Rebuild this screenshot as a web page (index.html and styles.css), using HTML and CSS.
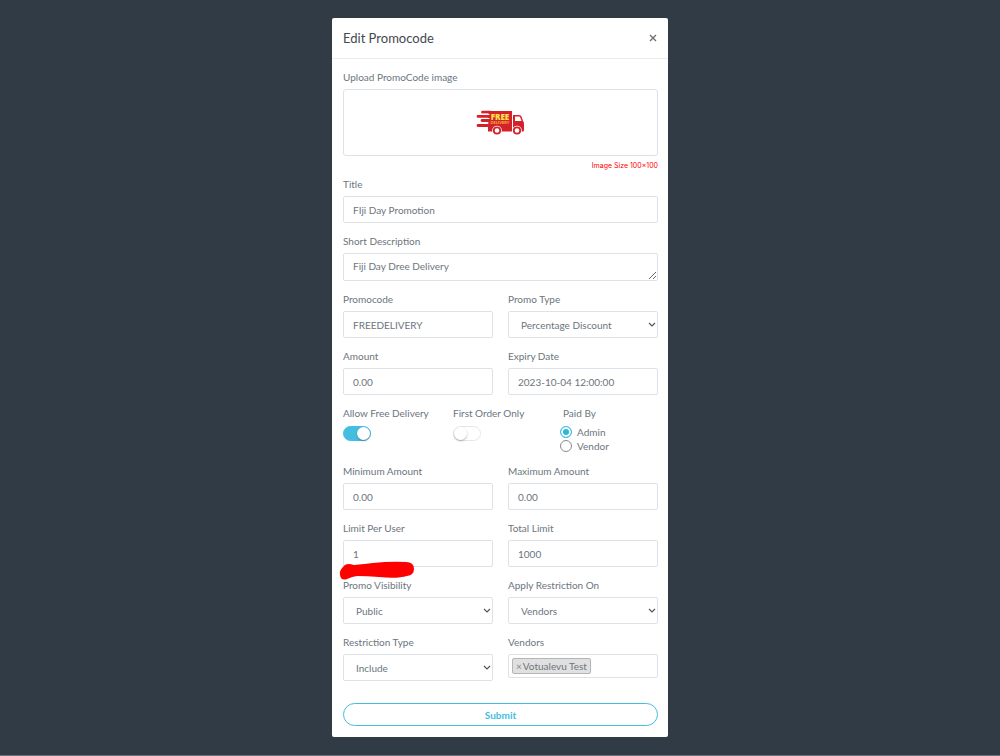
FILE: index.html
```html
<!DOCTYPE html>
<html lang="en">
<head>
    <meta charset="UTF-8">
    <meta name="viewport" content="width=device-width, initial-scale=1.0">
    <title>Edit Promocode</title>
    <link rel="stylesheet" href="styles.css">
</head>
<body>
    <div class="modal">
        <div class="modal-header">
            <h4 class="modal-title">Edit Promocode</h4>
            <button type="button" class="close" aria-label="Close">
                <svg width="8" height="8" viewBox="0 0 8 8"><path d="M1 1 L7 7 M7 1 L1 7" stroke="#6b7075" stroke-width="1.4" fill="none"/></svg>
            </button>
        </div>
        <form class="modal-body">
            <div class="upload-group">
                <label for="promoImage">Upload PromoCode image</label>
                <button type="button" class="dropify" id="promoImage">
                    <svg width="50" height="26" viewBox="0 0 50 26">
                        <path d="M12 1 H36 V21.500 H12 Z" fill="#d3222a"/>
                        <path d="M6.500 2.200 H14 M2 6.400 H14 M6 10.500 H14 M2 15.500 H14" stroke="#d3222a" stroke-width="2.800" stroke-linecap="round"/>
                        <path d="M7 4.300 H13 M7 8.500 H13 M7 12.900 H12" stroke="#fff" stroke-width="1.200" stroke-linecap="round"/>
                        <path d="M37 5 H43 Q45 5 45.500 6.500 L47 11 Q48 12 48 14 V20 Q48 21.500 47 21.500 H37 Z" fill="#d3222a"/>
                        <path d="M39 6.500 H43 Q44 6.500 44.300 7.500 L45.500 11 H39 Z" fill="#fff"/>
                        <circle cx="21" cy="20.500" r="4.800" fill="#fff"/>
                        <circle cx="21" cy="20.500" r="3.200" fill="#fff" stroke="#d3222a" stroke-width="1.800"/>
                        <circle cx="41" cy="20.500" r="4.800" fill="#fff"/>
                        <circle cx="41" cy="20.500" r="3.200" fill="#fff" stroke="#d3222a" stroke-width="1.800"/>
                        <text class="truck-free" x="24" y="10">FREE</text>
                        <text class="truck-delivery" x="24" y="14">DELIVERY</text>
                    </svg>
                </button>
                <p class="image-note">Image Size 100×100</p>
            </div>

            <div class="form-group">
                <label for="title">Title</label>
                <input type="text" id="title" class="form-control" value="FIji Day Promotion">
            </div>
            <div class="form-group">
                <label for="description">Short Description</label>
                <textarea id="description" class="form-control" rows="1">Fiji Day Dree Delivery</textarea>
            </div>

            <div class="row">
                <div class="form-group">
                    <label for="promocode">Promocode</label>
                    <input type="text" id="promocode" class="form-control" value="FREEDELIVERY">
                </div>
                <div class="form-group">
                    <label for="promoType">Promo Type</label>
                    <select id="promoType" class="form-control">
                        <option>Percentage Discount</option>
                    </select>
                </div>
            </div>

            <div class="row">
                <div class="form-group">
                    <label for="amount">Amount</label>
                    <input type="text" id="amount" class="form-control" value="0.00">
                </div>
                <div class="form-group">
                    <label for="expiry">Expiry Date</label>
                    <input type="text" id="expiry" class="form-control" value="2023-10-04 12:00:00">
                </div>
            </div>

            <div class="row row-switches">
                <div class="form-group">
                    <label for="freeDelivery">Allow Free Delivery</label>
                    <input type="checkbox" id="freeDelivery" class="switch" checked>
                </div>
                <div class="form-group">
                    <label for="firstOrder">First Order Only</label>
                    <input type="checkbox" id="firstOrder" class="switch">
                </div>
                <fieldset class="form-group">
                    <legend>Paid By</legend>
                    <div class="radios">
                        <label class="radio"><input type="radio" name="paidBy" checked>Admin</label>
                        <label class="radio"><input type="radio" name="paidBy">Vendor</label>
                    </div>
                </fieldset>
            </div>

            <div class="row">
                <div class="form-group">
                    <label for="minAmount">Minimum Amount</label>
                    <input type="text" id="minAmount" class="form-control" value="0.00">
                </div>
                <div class="form-group">
                    <label for="maxAmount">Maximum Amount</label>
                    <input type="text" id="maxAmount" class="form-control" value="0.00">
                </div>
            </div>

            <div class="row">
                <div class="form-group marked">
                    <label for="userLimit">Limit Per User</label>
                    <input type="text" id="userLimit" class="form-control" value="1">
                    <svg class="marker" width="76" height="20" viewBox="0 0 76 20">
                        <path d="M4 6 Q7 1 15 4 Q26 3 34 2 Q52 0 67 1 Q75 1 75 8 Q75 14 68 15 Q58 18 40 16 Q28 15 18 15 Q12 16 8 18 Q2 20 1 14 Q0 10 4 6 Z" fill="#fe0000"/>
                    </svg>
                </div>
                <div class="form-group">
                    <label for="totalLimit">Total Limit</label>
                    <input type="text" id="totalLimit" class="form-control" value="1000">
                </div>
            </div>

            <div class="row">
                <div class="form-group">
                    <label for="visibility">Promo Visibility</label>
                    <select id="visibility" class="form-control">
                        <option>Public</option>
                    </select>
                </div>
                <div class="form-group">
                    <label for="restrictionOn">Apply Restriction On</label>
                    <select id="restrictionOn" class="form-control">
                        <option>Vendors</option>
                    </select>
                </div>
            </div>

            <div class="row">
                <div class="form-group">
                    <label for="restrictionType">Restriction Type</label>
                    <select id="restrictionType" class="form-control">
                        <option>Include</option>
                    </select>
                </div>
                <div class="form-group">
                    <label for="vendors">Vendors</label>
                    <div class="tags">
                        <span class="tag"><button type="button" class="tag-remove" aria-label="Remove">×</button>Votualevu Test</span>
                        <input type="text" id="vendors" class="tags-input">
                    </div>
                </div>
            </div>

            <button type="submit" class="btn-submit">Submit</button>
        </form>
    </div>
</body>
</html>
```
FILE: styles.css
```css
* {
    box-sizing: border-box;
}

body {
    margin: 0;
    min-height: 100vh;
    padding: 18px 0;
    background-color: #313b45;
    border-bottom: 1px solid #6b727b;
    color: #6c757d;
    font-family: Lato, "Liberation Sans", sans-serif;
    font-size: 10px;
    line-height: 16px;
}

input, select, textarea, button {
    font: inherit;
    color: inherit;
}

.modal {
    width: 100%;
    max-width: 336px;
    margin: 0 auto;
    background-color: #fff;
    border-radius: 2px;
}

.modal-header {
    display: flex;
    justify-content: space-between;
    align-items: flex-start;
    padding: 12px 11px;
    border-bottom: 1px solid #e9ecef;
}

.modal-title {
    margin: 0;
    color: #43494f;
    font-size: 13px;
    font-weight: 400;
    line-height: 16px;
}

.close {
    display: flex;
    padding: 4px 0;
    border: 0;
    background: none;
    cursor: pointer;
}

.modal-body {
    padding: 10px 10px 11px 11px;
}

label, legend {
    display: block;
    padding: 0;
    margin-bottom: 4px;
}

.dropify {
    display: flex;
    align-items: center;
    justify-content: center;
    width: 100%;
    height: 67px;
    padding: 0;
    border: 1px solid #dee2e6;
    border-radius: 3px;
    background-color: #fff;
}

.truck-free {
    fill: #ffe14d;
    font-family: "Open Sans", sans-serif;
    font-size: 8px;
    font-weight: 800;
    text-anchor: middle;
}

.truck-delivery {
    fill: #f5b335;
    font-size: 4px;
    font-weight: 900;
    text-anchor: middle;
}

.image-note {
    margin: 4px 0;
    color: #f00;
    font-family: Inter, sans-serif;
    font-size: 7px;
    line-height: 12px;
    text-align: right;
}

.form-group {
    min-width: 0;
    margin: 0 0 10px;
    padding: 0;
    border: 0;
}

.row {
    display: grid;
    grid-template-columns: 1fr 1fr;
    gap: 15px;
}

.row-switches {
    grid-template-columns: 1fr 1fr 1fr;
}

.form-control {
    display: block;
    width: 100%;
    height: 27px;
    padding: 4px 9px;
    border: 1px solid #dee2e6;
    border-radius: 2px;
    background-color: #fff;
}

textarea.form-control {
    height: 28px;
    resize: vertical;
    overflow: hidden;
}

select.form-control {
    appearance: none;
    padding: 4px 12px;
    background: #fff url("data:image/svg+xml,%3Csvg xmlns='http://www.w3.org/2000/svg' width='8' height='6'%3E%3Cpath d='M1 1L4 4L7 1' fill='none' stroke='%23555' stroke-width='1.2'/%3E%3C/svg%3E") no-repeat right 1px center;
}

.switch {
    appearance: none;
    display: flex;
    width: 28px;
    height: 15px;
    margin: 5px 0 0;
    border: 1px solid #e6e6e6;
    border-radius: 8px;
    background-color: #fff;
}

.switch::before {
    content: "";
    width: 13px;
    height: 13px;
    border-radius: 50%;
    background-color: #fff;
    box-shadow: 0 1px 2px rgba(0, 0, 0, 0.3);
}

.switch:checked {
    justify-content: flex-end;
    border-color: #43bee1;
    background-color: #43bee1;
}

.radios {
    display: flex;
    flex-direction: column;
    margin-left: -3px;
}

.radio {
    display: flex;
    align-items: center;
    gap: 5px;
    margin: 0;
    line-height: 14px;
}

.radio input {
    appearance: none;
    width: 12px;
    height: 12px;
    margin: 0;
    border: 1px solid #8a8a8a;
    border-radius: 50%;
}

.radio input:checked {
    border-color: #43bee1;
    background-color: #2fb3db;
    box-shadow: inset 0 0 0 2px #fff;
}

/* red marker stroke lying over the field */
.marked {
    position: relative;
}

.marker {
    position: absolute;
    left: -4px;
    bottom: -14px;
}

.tags {
    display: flex;
    align-items: center;
    height: 24px;
    padding: 0 3px;
    border: 1px solid #dee2e6;
    border-radius: 2px;
}

.tag {
    display: flex;
    flex: none;
    padding: 0 3px;
    border: 1px solid #b5b5b5;
    border-radius: 2px;
    background-color: #e0e0e0;
    line-height: 14px;
}

.tag-remove {
    padding: 0 1px 0 0;
    border: 0;
    background: none;
    color: #888;
    cursor: pointer;
}

.tags-input {
    flex: 1;
    min-width: 0;
    padding: 0;
    border: 0;
    background: none;
    outline: none;
}

.btn-submit {
    display: block;
    width: 100%;
    height: 23px;
    margin-top: 12px;
    padding: 0;
    border: 1px solid #43bee1;
    border-radius: 12px;
    background-color: #fff;
    color: #43bee1;
    font-weight: 700;
    cursor: pointer;
}
```
